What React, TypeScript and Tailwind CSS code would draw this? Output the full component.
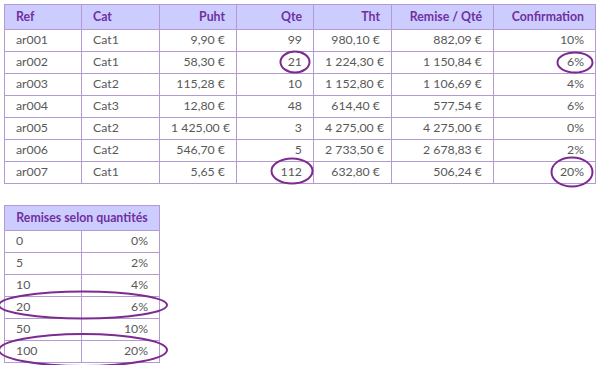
import React from 'react';

const rows = [
  ['ar001', 'Cat1', '9,90 €', '99', '980,10 €', '882,09 €', '10%'],
  ['ar002', 'Cat1', '58,30 €', '21', '1 224,30 €', '1 150,84 €', '6%'],
  ['ar003', 'Cat2', '115,28 €', '10', '1 152,80 €', '1 106,69 €', '4%'],
  ['ar004', 'Cat3', '12,80 €', '48', '614,40 €', '577,54 €', '6%'],
  ['ar005', 'Cat2', '1 425,00 €', '3', '4 275,00 €', '4 275,00 €', '0%'],
  ['ar006', 'Cat2', '546,70 €', '5', '2 733,50 €', '2 678,83 €', '2%'],
  ['ar007', 'Cat1', '5,65 €', '112', '632,80 €', '506,24 €', '20%'],
];

const headers = ['Ref', 'Cat', 'Puht', 'Qte', 'Tht', 'Remise / Qté', 'Confirmation'];
const widths = [77, 78, 77, 77, 78, 102, 102];

const remises = [
  ['0', '0%'],
  ['5', '2%'],
  ['10', '4%'],
  ['20', '6%'],
  ['50', '10%'],
  ['100', '20%'],
];

// hand drawn circles over the cells
const circles = [
  { cx: 295, cy: 62, rx: 14.5, ry: 10.5 },
  { cx: 575, cy: 62.5, rx: 17.5, ry: 10 },
  { cx: 292, cy: 171, rx: 20.5, ry: 12.5 },
  { cx: 572, cy: 172, rx: 20.5, ry: 14.5 },
  { cx: 83, cy: 305, rx: 84, ry: 13.5 },
  { cx: 83, cy: 350, rx: 84, ry: 16 },
];

const cell = 'border border-[#b49ad2] h-[22px] px-[11px] leading-none whitespace-nowrap';

export default function App() {
  return (
    <div
      className="relative w-[600px] h-[365px] overflow-hidden bg-white p-1 text-[12.3px] text-[#595959]"
      style={{ fontFamily: 'Lato, "Open Sans", sans-serif' }}
    >
      <table className="table-fixed border-collapse w-[591px]">
        <colgroup>
          {widths.map((w, i) => (
            <col key={i} style={{ width: w }} />
          ))}
        </colgroup>
        <thead>
          <tr className="bg-[#ccccff]">
            {headers.map((h, i) => (
              <th
                key={h}
                className={`${cell} h-[25px] font-bold text-[#7030a0] ${i < 2 ? 'text-left' : 'text-right'}`}
              >
                {h}
              </th>
            ))}
          </tr>
        </thead>
        <tbody>
          {rows.map((r) => (
            <tr key={r[0]}>
              {r.map((v, i) => (
                <td key={i} className={`${cell} ${i < 2 ? 'text-left' : 'text-right'}`}>
                  {v}
                </td>
              ))}
            </tr>
          ))}
        </tbody>
      </table>

      <table className="table-fixed border-collapse w-[155px] mt-[21px]">
        <colgroup>
          <col style={{ width: 77 }} />
          <col style={{ width: 78 }} />
        </colgroup>
        <thead>
          <tr className="bg-[#ccccff]">
            <th colSpan={2} className={`${cell} h-[25px] px-1 text-center font-bold text-[#7030a0]`}>
              Remises selon quantités
            </th>
          </tr>
        </thead>
        <tbody>
          {remises.map(([q, p]) => (
            <tr key={q}>
              <td className={`${cell} text-left`}>{q}</td>
              <td className={`${cell} text-right`}>{p}</td>
            </tr>
          ))}
        </tbody>
      </table>

      <svg className="absolute left-0 top-0 pointer-events-none" width="600" height="365">
        {circles.map((c, i) => (
          <ellipse key={i} cx={c.cx} cy={c.cy} rx={c.rx} ry={c.ry} fill="none" stroke="#7d2a91" strokeWidth="2" />
        ))}
      </svg>
    </div>
  );
}
